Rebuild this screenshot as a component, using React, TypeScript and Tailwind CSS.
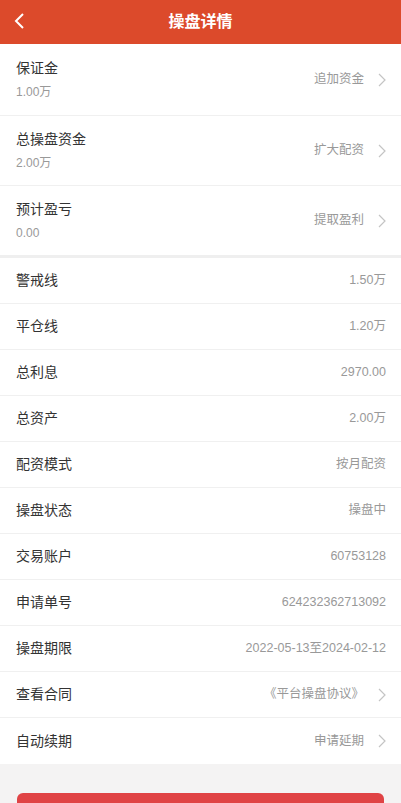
import React from "react";

type TopRow = { label: string; value: string; action: string; h: string; border: string };
type InfoRow = { label: string; value: string; link?: boolean };

const topRows: TopRow[] = [
  { label: "保证金", value: "1.00万", action: "追加资金", h: "h-[72px]", border: "border-b border-[#f0f0f0]" },
  { label: "总操盘资金", value: "2.00万", action: "扩大配资", h: "h-[70px]", border: "border-b border-[#f0f0f0]" },
  { label: "预计盈亏", value: "0.00", action: "提取盈利", h: "h-[72px]", border: "border-b-[3px] border-[#efefef]" }
];

const infoRows: InfoRow[] = [
  { label: "警戒线", value: "1.50万" },
  { label: "平仓线", value: "1.20万" },
  { label: "总利息", value: "2970.00" },
  { label: "总资产", value: "2.00万" },
  { label: "配资模式", value: "按月配资" },
  { label: "操盘状态", value: "操盘中" },
  { label: "交易账户", value: "60753128" },
  { label: "申请单号", value: "624232362713092" },
  { label: "操盘期限", value: "2022-05-13至2024-02-12" },
  { label: "查看合同", value: "《平台操盘协议》", link: true },
  { label: "自动续期", value: "申请延期", link: true }
];

function Chevron() {
  return (
    <svg width="8" height="14" viewBox="0 0 8 14" className="ml-[14px] shrink-0">
      <path d="M1 1l6 6-6 6" fill="none" stroke="#c4c4c4" strokeWidth="1.2" />
    </svg>
  );
}

export default function App() {
  return (
    <div
      className="flex min-h-[803px] w-[401px] flex-col bg-[#f4f3f3] pb-6"
      style={{ fontFamily: '"Liberation Sans", "Noto Sans CJK SC", sans-serif' }}
    >
      <header className="relative flex h-[44px] shrink-0 items-center justify-center bg-[#dc4a2b]">
        <svg width="11" height="16" viewBox="0 0 11 16" className="absolute left-[14px] top-[13px]">
          <path d="M9 1L2 8l7 7" fill="none" stroke="#fff" strokeWidth="2" />
        </svg>
        <h1 className="text-[16px] font-bold text-white">操盘详情</h1>
      </header>

      <section className="bg-white">
        {topRows.map((r) => (
          <div key={r.label} className={`flex items-center justify-between pl-4 pr-[15px] ${r.h} ${r.border}`}>
            <div className="flex flex-col">
              <span className="text-[14px] leading-5 text-[#333]">{r.label}</span>
              <span className="mt-1 text-[12px] leading-5 text-[#999]">{r.value}</span>
            </div>
            <div className="flex items-center">
              <span className="text-[12.5px] text-[#999]">{r.action}</span>
              <Chevron />
            </div>
          </div>
        ))}
      </section>

      <section className="bg-white">
        {infoRows.map((r, i) => (
          <div
            key={r.label}
            className={`flex h-[46px] items-center justify-between pl-4 pr-[15px] ${
              i < infoRows.length - 1 ? "border-b border-[#f0f0f0]" : ""
            }`}
          >
            <span className="text-[14px] text-[#333]">{r.label}</span>
            {r.link ? (
              <div className="flex items-center">
                <span className="text-[12.5px] text-[#999]">{r.value}</span>
                <Chevron />
              </div>
            ) : (
              <span className="text-[12.5px] text-[#999]">{r.value}</span>
            )}
          </div>
        ))}
      </section>

      <div className="px-[17px] pt-[29px]">
        <button className="h-[44px] w-full rounded-md bg-[#e04345] text-[16px] text-white">申请结算</button>
      </div>
    </div>
  );
}
